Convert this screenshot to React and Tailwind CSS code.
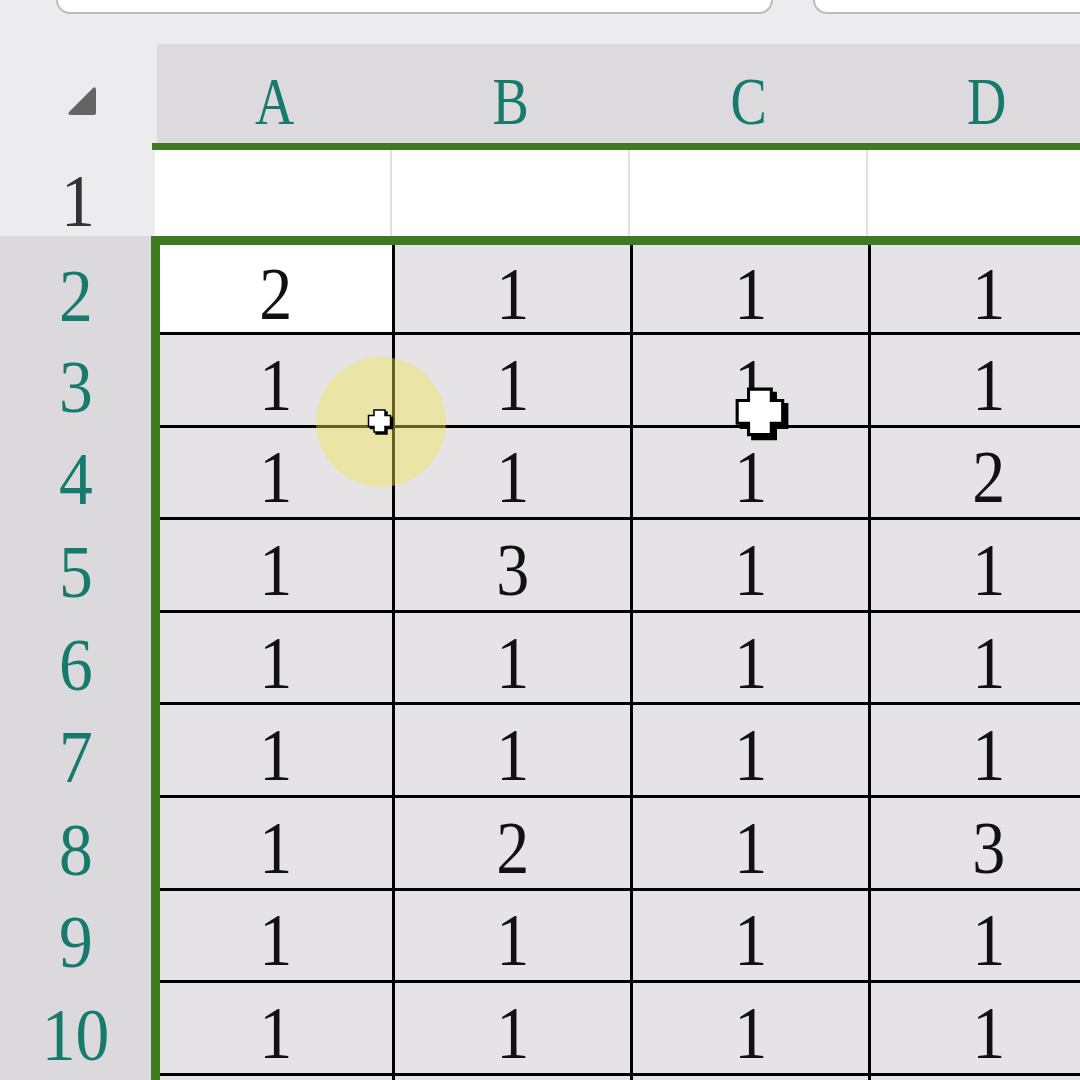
import React from "react";

const SERIF = { fontFamily: '"Liberation Serif", "Times New Roman", serif' };

const data = [
  [2, 1, 1, 1],
  [1, 1, 1, 1],
  [1, 1, 1, 2],
  [1, 3, 1, 1],
  [1, 1, 1, 1],
  [1, 1, 1, 1],
  [1, 2, 1, 3],
  [1, 1, 1, 1],
  [1, 1, 1, 1],
  ["", "", "", ""],
];

const colWidths = ["w-[235px]", "w-[238px]", "w-[238px]", "w-[238px]"];

function Plus({ className }) {
  const d = "M16 4 H38 V15 H49 V37 H38 V48 H16 V37 H5 V15 H16 Z";
  return (
    <svg className={className} viewBox="0 0 58 58">
      <path d={d} transform="translate(4 4)" fill="#000" stroke="#000" strokeWidth="3" />
      <path d={d} fill="#fff" stroke="#000" strokeWidth="3" />
    </svg>
  );
}

export default function App() {
  return (
    <div className="relative w-[1080px] h-[1080px] overflow-hidden bg-[#ecebee]" style={SERIF}>
      {/* tab strip */}
      <div className="flex h-[44px] items-start">
        <div className="ml-[56px] w-[717px] h-[14px] bg-white border-b-2 border-l-2 border-r-2 border-[#bcbbbd] rounded-bl-[16px] rounded-br-[16px]" />
        <div className="ml-[40px] flex-1 h-[14px] bg-white border-b-2 border-l-2 border-[#bcbbbd] rounded-bl-[16px] -mr-[20px]" />
      </div>

      {/* column header */}
      <div className="flex h-[99px]">
        <div className="w-[157px] shrink-0 bg-[#ecebee]">
          <svg className="ml-[66px] mt-[41px] w-[32px] h-[32px]" viewBox="0 0 32 32">
            <path d="M27 3 Q30 1 30 5 L30 28 Q30 30 28 30 L5 30 Q1 30 3 27 Z" fill="#646464" />
          </svg>
        </div>
        {["A", "B", "C", "D"].map((l, i) => (
          <div
            key={l}
            className={`${colWidths[i]} shrink-0 bg-[#dcdadd] flex items-center justify-center pt-[14px] text-[68px] leading-none text-[#167a6c]`}
          >
            <span className="inline-block scale-x-[0.8]">{l}</span>
          </div>
        ))}
        <div className="flex-1 bg-[#dcdadd]" />
      </div>
      <div className="flex h-[7px]">
        <div className="w-[152px] shrink-0 bg-[#ecebee]" />
        <div className="flex-1 bg-[#3e7b20]" />
      </div>

      {/* row 1 */}
      <div className="flex h-[86px]">
        <div className="w-[155px] shrink-0 bg-[#ecebee] flex items-center justify-center pt-[14px] text-[75px] leading-none text-[#333333]">
          <span className="inline-block scale-x-[0.9]">1</span>
        </div>
        <div className="w-[237px] shrink-0 bg-white border-r-2 border-[#e1dfe2]" />
        <div className="w-[238px] shrink-0 bg-white border-r-2 border-[#e1dfe2]" />
        <div className="w-[238px] shrink-0 bg-white border-r-2 border-[#e1dfe2]" />
        <div className="flex-1 bg-white" />
      </div>

      {/* selection top border */}
      <div className="flex h-[9px]">
        <div className="w-[151px] shrink-0 bg-[#dbd9dc]" />
        <div className="flex-1 bg-[#3e7b20]" />
      </div>

      {/* selected rows */}
      {data.map((row, r) => (
        <div key={r} className={`flex ${r === 0 ? "h-[90px]" : "h-[92.6px]"}`}>
          <div className="w-[151px] shrink-0 bg-[#dbd9dc] flex items-center justify-center pt-[10px] text-[75px] leading-none text-[#167a6c]">
            <span className="inline-block scale-x-[0.9]">{r < 9 ? r + 2 : ""}</span>
          </div>
          <div className="w-[9px] shrink-0 bg-[#3e7b20]" />
          {row.map((v, c) => (
            <div
              key={c}
              className={`${colWidths[c]} shrink-0 border-r-[3px] border-b-[3px] border-black flex items-center justify-center pt-[9px] text-[75px] leading-none text-[#111] ${
                r === 0 && c === 0 ? "bg-white" : "bg-[#e5e3e6]"
              }`}
            >
              <span className="inline-block scale-x-[0.88]">{v}</span>
            </div>
          ))}
          <div className="flex-1 bg-[#e5e3e6] border-b-[3px] border-black" />
        </div>
      ))}

      {/* cursor highlight and cursors */}
      <div className="absolute left-[316px] top-[357px] w-[130px] h-[130px] rounded-full bg-[rgba(240,230,80,0.42)]" />
      <Plus className="absolute left-[366px] top-[408px] w-[29px] h-[29px]" />
      <Plus className="absolute left-[732px] top-[385px] w-[60px] h-[60px]" />
    </div>
  );
}
